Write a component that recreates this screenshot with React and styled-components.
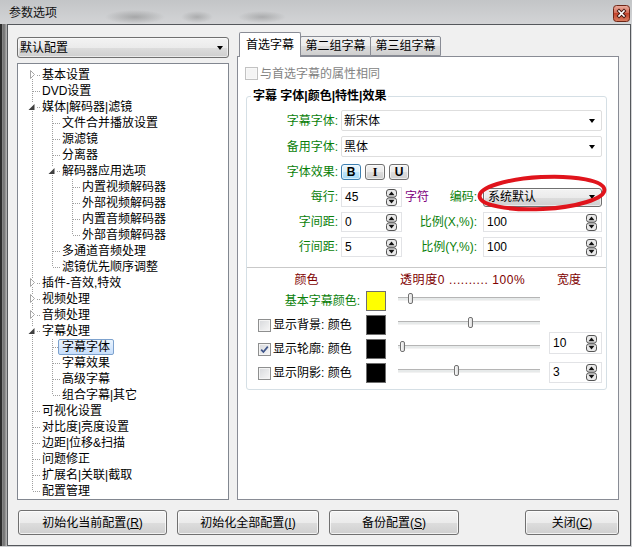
import React from 'react'
import styled, { createGlobalStyle } from 'styled-components'

const GlobalStyle = createGlobalStyle`
  html, body { margin: 0; padding: 0; }
  body {
    width: 632px;
    height: 547px;
    overflow: hidden;
    font-family: "Liberation Sans", "Noto Sans CJK SC", sans-serif;
    font-size: 12px;
    color: #000;
  }
`

const btnGrad = 'linear-gradient(to bottom, #f3f3f3 0%, #ebebeb 50%, #dddddd 51%, #cfcfcf 100%)'

const Window = styled.div`
  width: 632px;
  height: 547px;
  display: flex;
  flex-direction: column;
  background:
    radial-gradient(ellipse 30px 7px at 135px 17px, rgba(90,90,90,.35), transparent),
    radial-gradient(ellipse 16px 6px at 197px 17px, rgba(90,90,90,.3), transparent),
    radial-gradient(ellipse 24px 6px at 262px 17px, rgba(90,90,90,.3), transparent),
    linear-gradient(to bottom, #c3c5c7 0px, #d3d4d6 24px, #cfd0d2 100%);
`

const TitleBar = styled.div`
  height: 24px;
  flex: none;
  display: flex;
  align-items: center;
  justify-content: space-between;
  box-sizing: border-box;
  padding: 2px 2px 0 9px;
`

const Caption = styled.span`
  font-size: 12px;
  line-height: 16px;
  color: #111;
`

const Frame = styled.div`
  flex: 1;
  display: flex;
  padding-bottom: 1px;
  min-height: 0;
`

const FrameEdge = styled.div`
  width: 7px;
  flex: none;
  background: linear-gradient(to right, #2e2e2e 0, #2e2e2e 2px, #8d8d8d 2px, #6e6e6e 4px, #a4a4a4 6px, #b8b8b8 7px);
`

const Client = styled.div`
  width: 624px;
  box-sizing: border-box;
  border: 1px solid #55585c;
  background: #f0f0f0;
  display: flex;
  flex-direction: column;
  padding: 7px 11px 10px 9px;
`

const TopRow = styled.div`
  display: flex;
  gap: 8px;
  height: 468px;
`

const LeftCol = styled.div`
  width: 212px;
  flex: none;
  display: flex;
  flex-direction: column;
  gap: 5px;
  padding-top: 5px;
`

const RightCol = styled.div`
  flex: 1;
  display: flex;
  flex-direction: column;
  min-width: 0;
`

const Combo = styled.div`
  display: flex;
  align-items: center;
  box-sizing: border-box;
  height: ${p => p.$h || 21}px;
  padding: 0 ${p => p.$pr || 5}px 0 ${p => p.$pl || 2}px;
  flex: ${p => (p.$grow ? 1 : 'none')};
  ${p =>
    p.$flat
      ? 'background: #fff; border: 1px solid #dedede; border-radius: 2px;'
      : `background: ${btnGrad}; border: 1px solid #707070; border-radius: 3px; box-shadow: inset 0 0 0 1px rgba(255,255,255,.55);`}
`

const ComboText = styled.span`
  flex: 1;
  line-height: 16px;
  white-space: nowrap;
`

const Arrow = styled.span`
  width: 0;
  height: 0;
  border-left: 3.5px solid transparent;
  border-right: 3.5px solid transparent;
  border-top: 4px solid #000;
  flex: none;
`

/* ---------- tree ---------- */

const TreeBox = styled.div`
  height: 437px;
  box-sizing: border-box;
  border: 1px solid #828790;
  background: #fff;
  padding-top: 3px;
  overflow: hidden;
`

const TreeRow = styled.div`
  display: flex;
  align-items: center;
  height: 16px;
  padding-left: 4px;
`

const GuideCell = styled.span`
  width: 20px;
  height: 16px;
  flex: none;
  display: block;
  svg { display: block; }
`

const TreeLabel = styled.span`
  margin-left: -4px;
  padding: 0 3px;
  line-height: 14px;
  border: 1px solid ${p => (p.$selected ? '#7da2ce' : 'transparent')};
  border-radius: 2px;
  white-space: nowrap;
  background: ${p => (p.$selected ? 'linear-gradient(to bottom, #ebf4fd, #c7defb)' : 'transparent')};
`

const treeData = [
  ['基本设置', 0, 'closed'],
  ['DVD设置', 0],
  ['媒体|解码器|滤镜', 0, 'open'],
  ['文件合并播放设置', 1],
  ['源滤镜', 1],
  ['分离器', 1],
  ['解码器应用选项', 1, 'open'],
  ['内置视频解码器', 2],
  ['外部视频解码器', 2],
  ['内置音频解码器', 2],
  ['外部音频解码器', 2],
  ['多通道音频处理', 1],
  ['滤镜优先顺序调整', 1],
  ['插件-音效,特效', 0, 'closed'],
  ['视频处理', 0, 'closed'],
  ['音频处理', 0, 'closed'],
  ['字幕处理', 0, 'open'],
  ['字幕字体', 1, null, true],
  ['字幕效果', 1],
  ['高级字幕', 1],
  ['组合字幕|其它', 1],
  ['可视化设置', 0],
  ['对比度|亮度设置', 0],
  ['边距|位移&扫描', 0],
  ['问题修正', 0],
  ['扩展名|关联|截取', 0],
  ['配置管理', 0],
]

function hasNext(i) {
  const lv = treeData[i][1]
  for (let j = i + 1; j < treeData.length; j++) {
    if (treeData[j][1] < lv) return false
    if (treeData[j][1] === lv) return true
  }
  return false
}

function ancestor(i, k) {
  for (let j = i - 1; j >= 0; j--) if (treeData[j][1] === k) return j
  return -1
}

const dot = { stroke: '#a0a0a0', strokeWidth: 1, strokeDasharray: '1 1' }

function Guide({ pass, self, first, last, exp }) {
  return (
    <GuideCell>
      <svg width="20" height="16" viewBox="0 0 20 16">
        {pass && <line x1="10.5" y1="0" x2="10.5" y2="16" {...dot} />}
        {self && !first && <line x1="10.5" y1="0" x2="10.5" y2={exp ? 3 : 8} {...dot} />}
        {self && !last && <line x1="10.5" y1={exp ? 12 : 8} x2="10.5" y2="16" {...dot} />}
        {self && !exp && <line x1="11" y1="8.5" x2="19" y2="8.5" {...dot} />}
        {self && exp && <line x1="15" y1="8.5" x2="19" y2="8.5" {...dot} />}
        {self && exp === 'closed' && (
          <path d="M8.5 3.5 L8.5 11.5 L12.5 7.5 Z" fill="#fff" stroke="#a6a6a6" />
        )}
        {self && exp === 'open' && <path d="M12.5 5 L12.5 11 L6.5 11 Z" fill="#3f3f3f" />}
      </svg>
    </GuideCell>
  )
}

function Tree() {
  return (
    <TreeBox>
      {treeData.map(([text, lv, exp, selected], i) => {
        const cells = []
        for (let k = 0; k < lv; k++) {
          cells.push(<Guide key={k} pass={hasNext(ancestor(i, k))} />)
        }
        cells.push(<Guide key="self" self first={i === 0} last={!hasNext(i)} exp={exp} />)
        return (
          <TreeRow key={text}>
            {cells}
            <TreeLabel $selected={selected}>{text}</TreeLabel>
          </TreeRow>
        )
      })}
    </TreeBox>
  )
}

/* ---------- tabs ---------- */

const TabStrip = styled.div`
  display: flex;
  align-items: flex-end;
  height: 25px;
  flex: none;
  padding-left: 2px;
  margin-bottom: -1px;
  position: relative;
  z-index: 1;
`

const Tab = styled.div`
  box-sizing: border-box;
  width: ${p => p.$w}px;
  height: ${p => (p.$active ? 25 : 20)}px;
  margin-bottom: ${p => (p.$active ? 0 : 1)}px;
  margin-left: ${p => (p.$first ? 0 : -1)}px;
  border: 1px solid #898c95;
  border-bottom: ${p => (p.$active ? 'none' : '1px solid #898c95')};
  border-radius: 2px 2px 0 0;
  background: ${p => (p.$active ? '#fff' : 'linear-gradient(to bottom, #f2f2f2 0%, #ebebeb 50%, #dddddd 51%, #cfcfcf 100%)')};
  display: flex;
  align-items: center;
  justify-content: center;
  padding-bottom: ${p => (p.$active ? 1 : 0)}px;
  line-height: 16px;
  white-space: nowrap;
  position: relative;
  z-index: ${p => (p.$active ? 2 : 1)};
`

const TabPanel = styled.div`
  height: 444px;
  box-sizing: border-box;
  border: 1px solid #898c95;
  background: #fff;
  padding: 10px 11px 0 8px;
  display: flex;
  flex-direction: column;
`

const CheckRow = styled.label`
  display: flex;
  align-items: center;
  gap: 2px;
  height: 13px;
  margin-left: -1px;
  line-height: 14px;
  color: ${p => (p.$disabled ? '#838383' : '#000')};
  white-space: nowrap;
`

const Check = styled.span`
  box-sizing: border-box;
  width: 13px;
  height: 13px;
  flex: none;
  display: inline-flex;
  align-items: center;
  justify-content: center;
  border: 1px solid ${p => (p.$disabled ? '#c2c2c2' : '#8e8f8f')};
  background: ${p => (p.$disabled ? '#f4f4f4' : 'linear-gradient(135deg, #d6d8db 0%, #f7f7f7 100%)')};
  box-shadow: inset 0 0 0 1px ${p => (p.$disabled ? '#f8f8f8' : '#f4f4f4')};
  svg { display: block; }
`

function CheckBox({ checked, disabled }) {
  return (
    <Check $disabled={disabled}>
      {checked && (
        <svg width="9" height="9" viewBox="0 0 9 9">
          <path d="M1.2 4.6 L3.4 7 L7.8 1.6" fill="none" stroke="#3d5489" strokeWidth="1.7" />
        </svg>
      )}
    </Check>
  )
}

/* ---------- group box ---------- */

const Group = styled.fieldset`
  margin: 8px 0 0 0;
  padding: 6px 4px 6px 0;
  border: 1px solid #d5dfe5;
  border-radius: 3px;
  min-width: 0;
`

const GroupTitle = styled.legend`
  margin-left: 4px;
  padding: 0 2px;
  font-weight: bold;
  line-height: 16px;
  height: 16px;
  white-space: nowrap;
`

const GroupBody = styled.div`
  display: flex;
  flex-direction: column;
`

const Row = styled.div`
  display: flex;
  align-items: center;
  height: ${p => p.$h}px;
  margin-top: ${p => p.$mt || 0}px;
`

const Text = styled.span`
  color: ${p => p.$color || '#000'};
  line-height: 16px;
  white-space: nowrap;
`

const Label = styled(Text)`
  width: 91px;
  flex: none;
  text-align: right;
  margin-right: 3px;
`

const Mid = styled.div`
  width: 75px;
  flex: none;
  box-sizing: border-box;
  padding-left: 3px;
  margin-right: 6px;
  display: flex;
  align-items: center;
  justify-content: ${p => (p.$split ? 'space-between' : 'flex-end')};
`

const StyleBtn = styled.span`
  box-sizing: border-box;
  width: 20px;
  height: 16px;
  margin-right: 4px;
  display: inline-flex;
  align-items: center;
  justify-content: center;
  font-weight: bold;
  font-size: 12px;
  font-family: ${p => (p.$serif ? '"Liberation Serif", serif' : '"Liberation Sans", sans-serif')};
  border-radius: 3px;
  border: 1px solid ${p => (p.$on ? '#3c7fb1' : '#707070')};
  background: ${p => (p.$on ? 'linear-gradient(to bottom, #eaf6fd 0%, #d9f0fc 50%, #bee6fd 51%, #a7d9f5 100%)' : btnGrad)};
  box-shadow: inset 0 0 0 1px rgba(255,255,255,.6);
`

const SpinBox = styled.div`
  box-sizing: border-box;
  width: ${p => (p.$w ? `${p.$w}px` : 'auto')};
  flex: ${p => (p.$w ? 'none' : 1)};
  height: ${p => p.$h || 20}px;
  background: #fff;
  border: 1px solid #e2e3e6;
  display: flex;
  align-items: center;
  justify-content: space-between;
  padding: 0 4px 0 3px;
  margin-bottom: ${p => (p.$lift || 0) * 2}px;
  svg { display: block; }
`

function SpinArrows() {
  return (
    <svg width="11" height="17" viewBox="0 0 11 17">
      <rect x="0.5" y="0.5" width="10" height="7.6" rx="2.5" fill="#e9e9e9" stroke="#555" />
      <rect x="0.5" y="8.9" width="10" height="7.6" rx="2.5" fill="#e9e9e9" stroke="#555" />
      <path d="M2.5 6.2 L5.5 2.6 L8.5 6.2 Z" fill="#111" />
      <path d="M2.5 10.8 L5.5 14.4 L8.5 10.8 Z" fill="#111" />
    </svg>
  )
}

function Spin({ value, w, h, lift }) {
  return (
    <SpinBox $w={w} $h={h} $lift={lift}>
      <Text>{value}</Text>
      <SpinArrows />
    </SpinBox>
  )
}

const EncodeWrap = styled.div`
  position: relative;
  flex: 1;
  display: flex;
  align-items: center;
`

const Ring = styled.svg`
  position: absolute;
  left: -6px;
  top: -13px;
  overflow: visible;
  pointer-events: none;
`

const Sep = styled.div`
  height: 1px;
  background: #c9c9c9;
  margin: 10px -4px 0 0;
`

const ColorGrid = styled.div`
  display: grid;
  grid-template-columns: 119px 32px 151px 53px;
  grid-template-rows: 14px repeat(4, 20px);
  row-gap: 4px;
  align-items: center;
  margin-top: 5px;
`

const HeadCell = styled(Text)`
  color: #800000;
  line-height: 14px;
  text-align: ${p => p.$align || 'left'};
  padding-left: ${p => p.$pl || 0}px;
  letter-spacing: ${p => p.$ls || 0}px;
`

const ColorLabel = styled.div`
  display: flex;
  align-items: center;
  justify-content: ${p => (p.$right ? 'flex-end' : 'flex-start')};
  gap: 2px;
  padding: ${p => (p.$right ? '0 6px 0 0' : '0 0 0 11px')};
  line-height: 16px;
  white-space: nowrap;
  color: ${p => p.$color || '#000'};
`

const Swatch = styled.span`
  box-sizing: border-box;
  width: 20px;
  height: 20px;
  display: block;
  border: 1px solid #6f6f6f;
  background: ${p => p.$color};
`

const Slider = styled.div`
  display: flex;
  align-items: center;
  height: 20px;
`

const Track = styled.div`
  position: relative;
  width: 142px;
  height: 4px;
  margin-top: -4px;
  box-sizing: border-box;
  background: #e7eaea;
  border-top: 1px solid #b5b5b5;
  border-bottom: 1px solid #f2f2f2;
`

const Thumb = styled.span`
  position: absolute;
  top: -5px;
  left: ${p => p.$pos}px;
  width: 5px;
  height: 11px;
  box-sizing: border-box;
  border: 1px solid #727272;
  border-radius: 2px;
  background: linear-gradient(to right, #fafafa, #dcdcdc);
`

/* ---------- bottom buttons ---------- */

const ButtonRow = styled.div`
  display: flex;
  margin-top: 10px;
  height: 25px;
  padding-left: 1px;
  gap: 10px;
`

const Button = styled.button`
  box-sizing: border-box;
  width: ${p => p.$w}px;
  height: 25px;
  margin-left: ${p => (p.$push ? 'auto' : '0')};
  border: 1px solid #707070;
  border-radius: 3px;
  background: ${btnGrad};
  box-shadow: inset 0 0 0 1px rgba(255,255,255,.7);
  font-family: "Liberation Sans", "Noto Sans CJK SC", sans-serif;
  font-size: 12px;
  line-height: 16px;
  color: #000;
  padding: 0;
  white-space: nowrap;
`

function CloseIcon() {
  return (
    <svg width="17" height="17" viewBox="0 0 17 17">
      <defs>
        <linearGradient id="closeGrad" x1="0" y1="0" x2="0" y2="1">
          <stop offset="0" stopColor="#eab0a2" />
          <stop offset="0.48" stopColor="#d36a55" />
          <stop offset="0.5" stopColor="#c2432c" />
          <stop offset="1" stopColor="#db8063" />
        </linearGradient>
      </defs>
      <rect x="0.5" y="0.5" width="16" height="16" rx="3" fill="url(#closeGrad)" stroke="#6e2617" />
      <path d="M6 6 L11 11 M11 6 L6 11" stroke="#40160e" strokeWidth="3.4" strokeLinecap="square" />
      <path d="M6 6 L11 11 M11 6 L6 11" stroke="#fff" strokeWidth="1.6" strokeLinecap="square" />
    </svg>
  )
}

const green = '#0a7f0a'

export default function App() {
  return (
    <>
      <GlobalStyle />
      <Window>
        <TitleBar>
          <Caption>参数选项</Caption>
          <CloseIcon />
        </TitleBar>
        <Frame>
          <FrameEdge />
          <Client>
            <TopRow>
              <LeftCol>
                <Combo>
                  <ComboText>默认配置</ComboText>
                  <Arrow />
                </Combo>
                <Tree />
              </LeftCol>
              <RightCol>
                <TabStrip>
                  <Tab $active $first $w={62}>首选字幕</Tab>
                  <Tab $w={71}>第二组字幕</Tab>
                  <Tab $w={71}>第三组字幕</Tab>
                </TabStrip>
                <TabPanel>
                  <CheckRow $disabled>
                    <CheckBox disabled />
                    <span>与首选字幕的属性相同</span>
                  </CheckRow>
                  <Group>
                    <GroupTitle>字幕 字体|颜色|特性|效果</GroupTitle>
                    <GroupBody>
                      <Row $h={21}>
                        <Label $color={green}>字幕字体:</Label>
                        <Combo $flat $grow $h={21} $pr={6}>
                          <ComboText>新宋体</ComboText>
                          <Arrow />
                        </Combo>
                      </Row>
                      <Row $h={21} $mt={5}>
                        <Label $color={green}>备用字体:</Label>
                        <Combo $flat $grow $h={21} $pr={6}>
                          <ComboText>黑体</ComboText>
                          <Arrow />
                        </Combo>
                      </Row>
                      <Row $h={16} $mt={7}>
                        <Label $color={green}>字体效果:</Label>
                        <StyleBtn $on>B</StyleBtn>
                        <StyleBtn $serif>I</StyleBtn>
                        <StyleBtn>U</StyleBtn>
                      </Row>
                      <Row $h={20} $mt={7}>
                        <Label $color={green}>每行:</Label>
                        <Spin value="45" w={61} />
                        <Mid $split>
                          <Text $color="#800080">字符</Text>
                          <Text $color={green}>编码:</Text>
                        </Mid>
                        <EncodeWrap>
                          <Combo $grow $h={19} $pl={4} $pr={6}>
                            <ComboText>系统默认</ComboText>
                            <Arrow />
                          </Combo>
                          <Ring width="130" height="36" viewBox="0 0 130 36">
                            <ellipse
                              cx="65"
                              cy="18"
                              rx="62.5"
                              ry="16"
                              fill="none"
                              stroke="#e0141c"
                              strokeWidth="4"
                              transform="rotate(-3 65 18)"
                            />
                          </Ring>
                        </EncodeWrap>
                      </Row>
                      <Row $h={20} $mt={5}>
                        <Label $color={green}>字间距:</Label>
                        <Spin value="0" w={61} />
                        <Mid>
                          <Text $color={green}>比例(X,%):</Text>
                        </Mid>
                        <Spin value="100" />
                      </Row>
                      <Row $h={20} $mt={5}>
                        <Label $color={green}>行间距:</Label>
                        <Spin value="5" w={61} />
                        <Mid>
                          <Text $color={green}>比例(Y,%):</Text>
                        </Mid>
                        <Spin value="100" />
                      </Row>
                      <Sep />
                      <ColorGrid>
                        <HeadCell $align="center">颜色</HeadCell>
                        <span />
                        <HeadCell $pl={2} $ls={0.6}>透明度0 .......... 100%</HeadCell>
                        <HeadCell $pl={8}>宽度</HeadCell>

                        <ColorLabel $right $color={green}>基本字幕颜色:</ColorLabel>
                        <Swatch $color="#ffff00" />
                        <Slider><Track><Thumb $pos={10} /></Track></Slider>
                        <span />

                        <ColorLabel>
                          <CheckBox />
                          <span>显示背景: 颜色</span>
                        </ColorLabel>
                        <Swatch $color="#000" />
                        <Slider><Track><Thumb $pos={70} /></Track></Slider>
                        <span />

                        <ColorLabel>
                          <CheckBox checked />
                          <span>显示轮廓: 颜色</span>
                        </ColorLabel>
                        <Swatch $color="#000" />
                        <Slider><Track><Thumb $pos={2} /></Track></Slider>
                        <Spin value="10" w={53} h={22} lift={6} />

                        <ColorLabel>
                          <CheckBox />
                          <span>显示阴影: 颜色</span>
                        </ColorLabel>
                        <Swatch $color="#000" />
                        <Slider><Track><Thumb $pos={56} /></Track></Slider>
                        <Spin value="3" w={53} h={21} lift={1} />
                      </ColorGrid>
                    </GroupBody>
                  </Group>
                </TabPanel>
              </RightCol>
            </TopRow>
            <ButtonRow>
              <Button $w={149}>初始化当前配置(<u>R</u>)</Button>
              <Button $w={142}>初始化全部配置(<u>I</u>)</Button>
              <Button $w={130}>备份配置(<u>S</u>)</Button>
              <Button $w={94} $push>关闭(<u>C</u>)</Button>
            </ButtonRow>
          </Client>
        </Frame>
      </Window>
    </>
  )
}
